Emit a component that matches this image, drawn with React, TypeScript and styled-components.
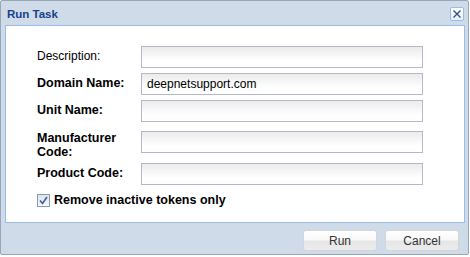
import React from "react";
import styled, { createGlobalStyle } from "styled-components";

const Global = createGlobalStyle`
  html, body { margin: 0; padding: 0; background: #ffffff; }
  body { font-family: "Liberation Sans", Arial, sans-serif; }
`;

const Window = styled.div`
  box-sizing: border-box;
  width: 469px;
  height: 255px;
  border: 1px solid #99a6b8;
  border-radius: 2px;
  background: #cfdbe8;
  display: flex;
  flex-direction: column;
  padding: 0 3px 0 4px;
`;

const Header = styled.div`
  height: 24px;
  display: flex;
  align-items: center;
  justify-content: space-between;
  padding: 0 0 0 2px;
`;

const Title = styled.span`
  font: bold 11.5px "Liberation Sans", Arial, sans-serif;
  color: #15428b;
  margin-top: 1px;
`;

const CloseBtn = styled.div`
  box-sizing: border-box;
  width: 14px;
  height: 14px;
  margin-right: 1px;
  margin-top: 1px;
  border: 1px solid #99bbe8;
  border-radius: 2px;
  background: linear-gradient(#ffffff, #e6eef8);
  display: flex;
  align-items: center;
  justify-content: center;
`;

const Body = styled.div`
  box-sizing: border-box;
  width: 460px;
  height: 198px;
  border: 1px solid #99bbe8;
  background: #ffffff;
  padding: 20px 0 0 31px;
  display: flex;
  flex-direction: column;
`;

const Row = styled.div<{ $mt: number }>`
  display: flex;
  align-items: flex-start;
  margin-top: ${(p) => p.$mt}px;
`;

const Label = styled.label<{ $bold?: boolean; $top?: number }>`
  width: 104px;
  box-sizing: border-box;
  padding-top: ${(p) => (p.$top ?? 3)}px;
  font-size: ${(p) => (p.$bold ? "12.5px" : "12px")};
  font-weight: ${(p) => (p.$bold ? "bold" : "normal")};
  line-height: 14px;
  color: #000;
`;

const Input = styled.input`
  box-sizing: border-box;
  width: 282px;
  height: 22px;
  border: 1px solid #b5b8c8;
  background: linear-gradient(#ebebeb 0px, #ffffff 14px);
  padding: 0 5px;
  font: 12px "Liberation Sans", Arial, sans-serif;
  color: #000;
  outline: none;
`;

const CheckRow = styled.div`
  display: flex;
  align-items: center;
  margin-top: 8px;
  gap: 4px;
`;

const CheckBox = styled.div`
  box-sizing: border-box;
  width: 13px;
  height: 13px;
  border: 1px solid #8e99a9;
  background: linear-gradient(#dfe3ea, #f6f7f9);
  display: flex;
  align-items: center;
  justify-content: center;
`;

const CheckText = styled.span`
  font-size: 12.5px;
  font-weight: bold;
  color: #000;
  line-height: 14px;
`;

const Footer = styled.div`
  flex: 1;
  display: flex;
  justify-content: flex-end;
  align-items: flex-start;
  padding: 7px 6px 0 0;
  gap: 8px;
`;

const Button = styled.button`
  box-sizing: border-box;
  width: 74px;
  height: 21px;
  border: 1px solid #d2d6dc;
  border-radius: 3px;
  background: linear-gradient(#ffffff 0%, #f8f8f8 48%, #e5e5e5 52%, #ececec 100%);
  font: 12px "Liberation Sans", Arial, sans-serif;
  color: #333;
  padding: 0;
  cursor: pointer;
`;

const rows = [
  { label: "Description:", bold: false, mt: 0, value: "" },
  { label: "Domain Name:", bold: true, mt: 5, value: "deepnetsupport.com" },
  { label: "Unit Name:", bold: true, mt: 5, value: "" },
  { label: "Manufacturer Code:", bold: true, mt: 9, value: "", top: 0 },
  { label: "Product Code:", bold: true, mt: 4, value: "" },
];

export default function App() {
  return (
    <>
      <Global />
      <Window>
        <Header>
          <Title>Run Task</Title>
          <CloseBtn>
            <svg width="10" height="10" viewBox="0 0 10 10">
              <path d="M1.5 1.5 L8.5 8.5 M8.5 1.5 L1.5 8.5" stroke="#2a4c8c" strokeWidth="1.3" />
            </svg>
          </CloseBtn>
        </Header>
        <Body>
          {rows.map((r) => (
            <Row key={r.label} $mt={r.mt}>
              <Label $bold={r.bold} $top={r.top}>
                {r.label}
              </Label>
              <Input defaultValue={r.value} />
            </Row>
          ))}
          <CheckRow>
            <CheckBox>
              <svg width="9" height="9" viewBox="0 0 9 9">
                <path d="M1 4.5 L3.5 7.5 L8 1" fill="none" stroke="#3a5fa8" strokeWidth="1.6" />
              </svg>
            </CheckBox>
            <CheckText>Remove inactive tokens only</CheckText>
          </CheckRow>
        </Body>
        <Footer>
          <Button>Run</Button>
          <Button>Cancel</Button>
        </Footer>
      </Window>
    </>
  );
}
